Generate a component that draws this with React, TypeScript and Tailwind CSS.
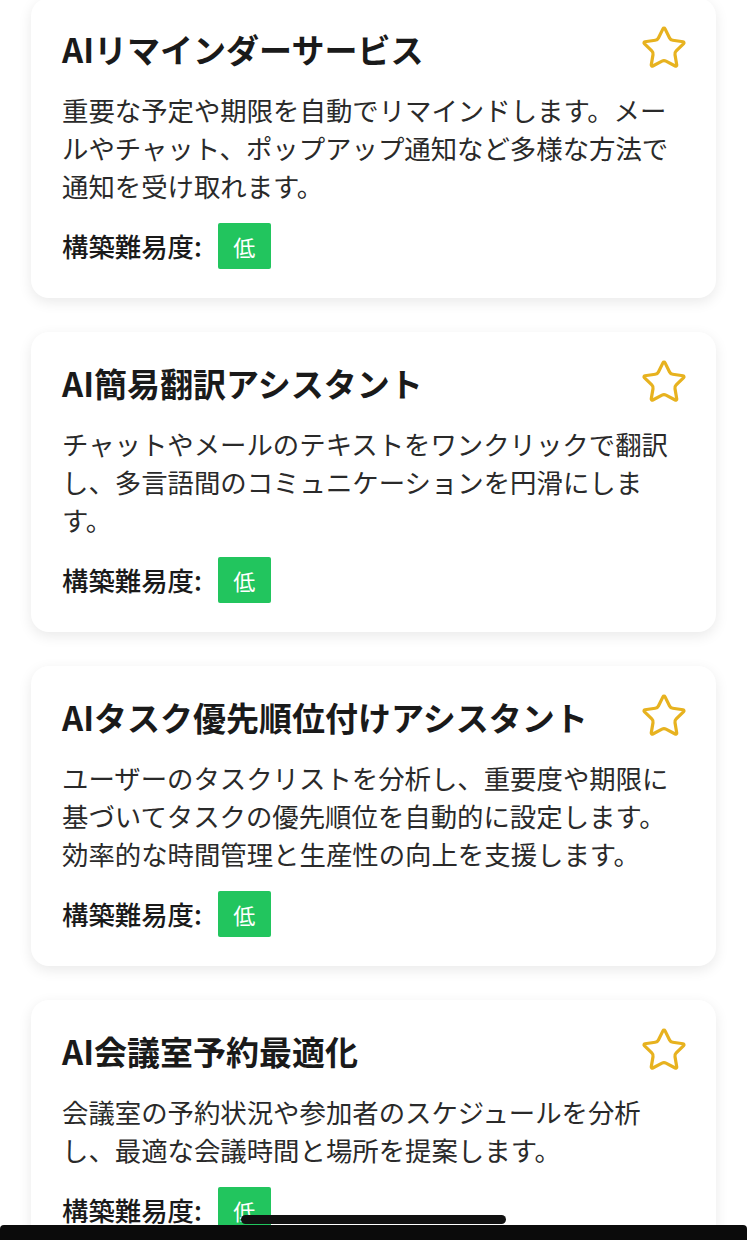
import { Star } from "lucide-react";

const services = [
	{
		id: "reminder",
		title: "AIリマインダーサービス",
		description:
			"重要な予定や期限を自動でリマインドします。メールやチャット、ポップアップ通知など多様な方法で通知を受け取れます。",
		level: "低",
	},
	{
		id: "translate",
		title: "AI簡易翻訳アシスタント",
		description:
			"チャットやメールのテキストをワンクリックで翻訳し、多言語間のコミュニケーションを円滑にします。",
		level: "低",
	},
	{
		id: "priority",
		title: "AIタスク優先順位付けアシスタント",
		description:
			"ユーザーのタスクリストを分析し、重要度や期限に基づいてタスクの優先順位を自動的に設定します。効率的な時間管理と生産性の向上を支援します。",
		level: "低",
	},
	{
		id: "room",
		title: "AI会議室予約最適化",
		description:
			"会議室の予約状況や参加者のスケジュールを分析し、最適な会議時間と場所を提案します。",
		level: "低",
	},
];

export default function App() {
	return (
		<div
			className="min-h-[1240px] bg-white"
			style={{ fontFamily: '"Noto Sans CJK JP", "Noto Sans", sans-serif' }}>
			<div className="flex flex-col gap-[34px] px-[31px] -mt-[2px] pb-10">
				{services.map((service) => (
					<div
						key={service.id}
						className="rounded-[18px] bg-white px-[31px] pt-[28px] pb-[29px] shadow-[0_4px_14px_rgba(0,0,0,0.09)]">
						<div className="flex items-start justify-between">
							<h2 className="text-[33px] font-semibold leading-[46px] text-[#1a1a1a]">
								{service.title}
							</h2>
							<Star
								size={48}
								strokeWidth={1.6}
								className="mr-[-3px] -mt-[2px] text-[#e7b21f] shrink-0"
							/>
						</div>
						<p className="mt-[19px] text-[26.4px] leading-[38px] text-[#2a2a2a]">
							{service.description}
						</p>
						<div className="mt-[18px] flex items-center gap-4">
							<span className="text-[26.4px] font-medium text-[#1a1a1a]">
								構築難易度:
							</span>
							<span className="flex h-[46px] w-[53px] items-center justify-center rounded-[2px] bg-[#22c55e] text-[22px] text-white">
								{service.level}
							</span>
						</div>
					</div>
				))}
			</div>

			<div className="fixed bottom-[16px] left-[241px] h-[9px] w-[265px] rounded-full bg-[#111]" />
			<div className="fixed bottom-0 left-0 right-0 h-[15px] rounded-t-[4px] bg-[#0b0b0b]" />
		</div>
	);
}
